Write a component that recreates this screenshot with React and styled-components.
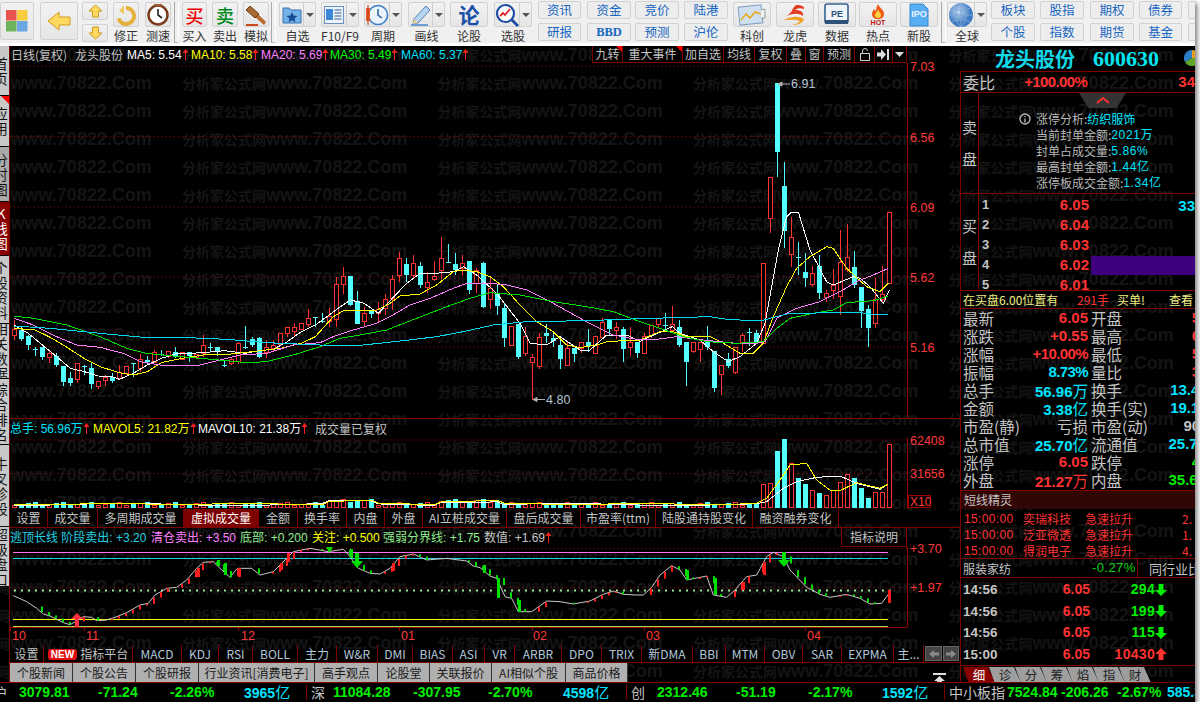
import React from 'react';
import styled, { createGlobalStyle } from 'styled-components';

const CJK = '"Noto Sans CJK SC", "Liberation Sans", sans-serif';
const NUM = '"Liberation Sans", "Noto Sans CJK SC", sans-serif';
const LINE = '#7d0000';
const RED = '#ff3232';
const GREEN = '#00ee00';
const CYAN = '#00e5ff';
const GREY = '#c4c4c4';

const Global = createGlobalStyle`
  html, body { margin: 0; padding: 0; background: #fff; }
  * { box-sizing: border-box; }
`;

const Window = styled.div`
  position: relative; isolation: isolate; width: 1195px; height: 702px; background: #000;
  box-shadow: 2px 3px 5px rgba(0,0,0,.55); display: flex; flex-direction: column;
  font-family: ${CJK}; overflow: hidden;
`;

/* ---------- watermark ---------- */
const WatermarkSvg = styled.svg`
  position: absolute; left: 0; top: 46px; width: 1195px; height: 656px; z-index: -1;
`;

/* ---------- toolbar ---------- */
const Toolbar = styled.div`
  flex: 0 0 46px; height: 46px; display: flex; align-items: flex-start; background: #f0f0f0; border-bottom: 3px solid #fff; overflow: hidden;
`;
const Tool = styled.div`
  flex: 0 0 ${p => p.$w}px; margin-left: ${p => p.$ml || 0}px; display: flex; flex-direction: column; align-items: stretch;
`;
const Face = styled.div`
  height: ${p => p.$h || 25}px; margin-top: ${p => p.$mt ?? 2}px; background: linear-gradient(#f2f2f2, #e6e6e6);
  border: 1px solid #d2d2d2; border-radius: 2px; display: flex; align-items: center; justify-content: center; position: relative;
`;
const Split = styled.div`
  flex: 0 0 12px; align-self: stretch; margin-left: auto; border-left: 1px solid #cfcfcf; display: flex; align-items: center; justify-content: center;
  &::after { content: ''; border: 4px solid transparent; border-top: 4px solid #555; border-bottom: 0; }
`;
const IconSlot = styled.div`flex: 1; display: flex; align-items: center; justify-content: center;`;
const ToolLabel = styled.div`
  text-align: center; font-size: 12px; line-height: 15px; color: #333; margin-top: 1px; white-space: nowrap;
`;
const Sep = styled.div`
  flex: 0 0 5px; height: 41px; margin: 2px 0 0 ${p => p.$ml || 3}px; border-left: 1px solid #a8a8a8; border-right: 1px solid #fff; border-bottom: 1px solid #bbb;
`;
const Stack = styled.div`
  flex: 0 0 ${p => p.$w || 44}px; margin-left: ${p => p.$ml || 0}px; display: flex; flex-direction: column; gap: 4px; padding-top: 1px;
`;
const TextBtn = styled.div`
  height: 18px; border: 1px solid #d2d2d2; border-radius: 2px; background: #ededed; color: #1766c0; font-size: 12.5px;
  line-height: 16px; text-align: center; font-weight: ${p => p.$bold ? 700 : 400}; font-family: ${p => p.$bold ? '"Liberation Serif", serif' : 'inherit'};
`;
const BigGlyph = styled.span`
  font-size: ${p => p.$s || 18}px; line-height: 1; font-weight: ${p => p.$w || 500}; color: ${p => p.$c};
`;

const IToolItem = ({ w, ml, label, split, children }) => (
  <Tool $w={w} $ml={ml}>
    <Face>
      <IconSlot>{children}</IconSlot>
      {split && <Split />}
    </Face>
    <ToolLabel>{label}</ToolLabel>
  </Tool>
);
const Pair = ({ ml, a, b, w, boldB }) => (
  <Stack $ml={ml} $w={w}><TextBtn>{a}</TextBtn><TextBtn $bold={boldB}>{b}</TextBtn></Stack>
);

/* ---------- body ---------- */
const Body = styled.div`flex: 0 0 637px; height: 637px; display: flex; border-bottom: 1px solid ${LINE}; overflow: hidden;`;
const Rail = styled.div`flex: 0 0 10px; border-right: 1px solid ${LINE}; display: flex; flex-direction: column; gap: 1px; overflow: hidden;`;
const RailTab = styled.div`
  flex: 0 0 ${p => p.$h}px; position: relative; overflow: hidden; display: flex; align-items: center;
  background: ${p => p.$active ? '#8a0000' : p.$dim ? '#a9a9a9' : '#c8c8c8'};
  color: ${p => p.$active ? '#fff' : '#111'};
  ${p => p.$corner ? `&::after { content:''; position:absolute; top:0; right:0; border:4px solid transparent; border-top-color:#f00; border-right-color:#f00; }` : ''}
`;
const RailText = styled.div`width: 14px; margin-left: -6px; font-size: 13.5px; line-height: 15px; word-break: break-all; text-align: center;`;

const Center = styled.div`flex: 0 0 950px; display: flex; flex-direction: column;`;
const PricePane = styled.div`flex: 0 0 373px; border-bottom: 1px solid ${LINE}; display: flex; flex-direction: column;`;
const Legend = styled.div`
  flex: 0 0 ${p => p.$h || 17}px; width: 897px; display: flex; align-items: center; font: 12px/1 ${NUM}; white-space: nowrap; padding-left: ${p => p.$pl ?? 1}px;
`;
const Seg = styled.span`
  flex: 0 0 ${p => p.$w}px; color: ${p => p.$c || GREY}; display: flex; align-items: center; white-space: pre;
`;
const CjkSeg = styled(Seg)`font-family: ${CJK}; font-size: 12px;`;
const ToolsRow = styled.div`margin-left: auto; display: flex; height: 17px;`;
const ToolTab = styled.div`
  width: ${p => p.$w}px; border-left: 1px solid ${LINE}; border-bottom: 1px solid ${LINE}; color: ${GREY}; font: 12px/16px ${CJK};
  text-align: center; position: relative; display: flex; align-items: center; justify-content: center; background: #000;
  ${p => p.$last ? `border-right:1px solid ${LINE};` : ''}
  ${p => p.$flag ? `&::after { content:''; position:absolute; top:0; right:0; border:3px solid transparent; border-top-color:#f00; border-right-color:#f00; }` : ''}
`;
const ChartSvg = styled.svg`display: block; flex: none; overflow: visible;`;
const VolPane = styled.div`flex: 0 0 90px; display: flex; flex-direction: column;`;
const TabRow = styled.div`flex: 0 0 ${p => p.$h}px; display: flex; border-bottom: 1px solid ${LINE};`;
const Tab = styled.div`
  flex: 0 0 ${p => p.$w}px; border-right: 1px solid ${LINE}; text-align: center; white-space: nowrap; overflow: hidden;
  font: 12px/${p => p.$lh || 17}px ${CJK}; background: ${p => p.$active ? '#7d0000' : 'transparent'};
  color: ${p => p.$active ? '#fff' : p.$c || GREY};
`;
const IndHeader = styled.div`
  flex: 0 0 19px; width: 897px; display: flex; align-items: center; font: 12px/1 ${NUM}; white-space: nowrap; border-right: 1px solid ${LINE};
`;
const InfoBtn = styled.div`
  margin-left: auto; width: 65px; height: 19px; border-left: 1px solid ${LINE}; border-bottom: 1px solid ${LINE}; color: ${GREY};
  font: 12px/18px ${CJK}; text-align: center;
`;
const NewBadge = styled.i`
  display: inline-block; font: bold 10px/11px ${NUM}; background: #e01010; color: #fff; border-radius: 3px; padding: 0 3px; margin-right: 3px; vertical-align: 1px;
`;
const NewsRow = styled.div`flex: 0 0 20px; display: flex; align-items: flex-start;`;
const NewsTab = styled.div`
  flex: 0 0 ${p => p.$w}px; height: 19px; background: #b0b0b0; border-right: 1px solid #333; color: #1a1a1a; text-align: center; font: 12px/19px ${CJK}; white-space: nowrap;
`;
const PinSlot = styled.div`margin-left: 305px; padding-top: 3px;`;
const ArrowBtn = styled.div`
  flex: 0 0 ${p => p.$w}px; margin: 1px 0 1px 1px; background: #444; border: 1px solid #666; display: flex; align-items: center; justify-content: center;
`;

/* ---------- right panel ---------- */
const Panel = styled.div`flex: 0 0 235px; display: flex; flex-direction: column; overflow: hidden;`;
const Title = styled.div`
  flex: 0 0 25px; display: flex; align-items: center; padding-left: 35px; color: #12d8e8; white-space: nowrap; position: relative;
  b { font: bold 20px/1 ${CJK}; } span { font: bold 22px/1 "Liberation Serif", serif; margin-left: 18px; color: #00e5f0; }
`;
const Globe = styled.div`margin-left: 25px;`;
const Boxed = styled.div`
  flex: 0 0 ${p => p.$h}px; border-left: 1px solid ${LINE}; border-top: 1px solid ${LINE}; display: flex; overflow: hidden;
`;
const WeiLabel = styled.div`width: 65px; padding-left: 2px; font-size: 16px; line-height: 20px; color: ${GREY};`;
const Bold = styled.span`font: bold 15px/20px ${NUM}; color: ${RED}; letter-spacing: ${p => p.$tight ? '-.6px' : 0}; margin-left: ${p => p.$ml || 0}px;`;
const SideLabel = styled.div`
  flex: 0 0 18px; border-right: 1px solid ${LINE}; color: ${GREY}; font-size: 15px; line-height: 32px; display: flex; flex-direction: column; align-items: center; justify-content: center;
`;
const SideWrap = styled.div`flex: 1; min-width: 0;`;
const Notch = styled.div`
  width: 47px; height: 15px; margin-left: 100px; background: #333; clip-path: polygon(0 0, 100% 0, 80% 100%, 20% 100%); display: flex; justify-content: center; padding-top: 3px;
`;
const InfoLines = styled.div`margin: 3px 0 0 57px; font-size: 12px; line-height: 16px; color: #b8b8b8; white-space: nowrap;`;
const InfoLine = styled.div`
  display: flex; align-items: center;
  b { font-weight: 400; color: ${CYAN}; font-family: ${p => p.$n ? NUM : CJK}; letter-spacing: ${p => p.$n ? '.6px' : 0}; }
  svg { margin-left: -17px; margin-right: 5px; }
`;
const BookRow = styled.div`
  height: 20px; display: grid; grid-template-columns: 13px 92px 1fr; column-gap: 2px; align-items: center; padding-left: 3px;
`;
const BookNum = styled.span`font: bold 13px/20px ${NUM}; color: ${GREY};`;
const BookPrice = styled.span`text-align: right; font: bold 15px/20px ${NUM}; color: ${RED};`;
const BookQty = styled.div`
  height: 19px; margin-top: 2px; text-align: right; font: bold 15px/19px ${NUM}; color: ${CYAN}; background: ${p => p.$fill ? '#3f007f' : 'transparent'};
`;
const BuyLine = styled.div`
  display: flex; width: 100%; padding-left: 2px; font-size: 12px; line-height: 17px; color: #f0f080; white-space: nowrap; border-bottom: 1px solid ${LINE};
`;
const BuyPart = styled.span`flex: 0 0 ${p => p.$w}px; color: ${p => p.$c || 'inherit'};`;
const Quote = styled.div`flex: 0 0 181px; border-left: 1px solid ${LINE}; overflow: hidden;`;
const QRow = styled.div`height: 18px; display: grid; grid-template-columns: 125px 133px; padding-left: 2px; width: 262px;`;
const QCell = styled.div`display: flex; justify-content: space-between; padding-left: ${p => p.$pl || 0}px; white-space: nowrap;`;
const QLabel = styled.span`font-size: 15.5px; line-height: 18px; color: ${GREY};`;
const QVal = styled.span`
  font: bold 15px/18px ${NUM}; color: ${p => p.$c || RED}; letter-spacing: ${p => p.$tight ? '-.6px' : 0};
  i { font: 400 15.5px/18px ${CJK}; font-style: normal; }
`;
const Sprite = styled.div`
  flex: 0 0 19px; border-left: 1px solid ${LINE}; border-top: 1px solid ${LINE}; background: #330606; color: ${GREY}; font-size: 12px; line-height: 18px; padding-left: 3px;
`;
const SpriteRows = styled.div`flex: 0 0 49px; border-left: 1px solid ${LINE}; padding-top: 2px; overflow: hidden;`;
const SpriteRow = styled.div`
  height: 16px; display: grid; grid-template-columns: 59px 62px 97px 20px; padding-left: 3px; color: ${RED}; font-size: 12px; line-height: 16px; white-space: nowrap;
  span:first-child { font-family: ${NUM}; letter-spacing: .35px; }
`;
const Sector = styled.div`
  flex: 0 0 20px; border: 1px solid ${LINE}; border-right: 0; display: flex; white-space: nowrap; align-items: center; color: ${GREY};
  font-size: 12px; padding-left: 2px;
`;
const SectorPct = styled.span`margin-left: 81px; flex: 0 0 45px; font: 13px/18px ${NUM}; color: #10d010; letter-spacing: .4px;`;
const SectorMore = styled.span`border-left: 1px solid ${LINE}; height: 18px; padding-left: 11px; font-size: 13px; line-height: 20px;`;
const Ticks = styled.div`flex: 0 0 87px; border-left: 1px solid ${LINE}; padding-top: 1px;`;
const TickRow = styled.div`
  height: 21.5px; display: grid; grid-template-columns: 60px 67px 65px 16px; align-items: center; padding-left: 2px;
`;
const TickTime = styled.span`font: bold 13.5px/21px ${NUM}; color: ${GREY};`;
const TickPrice = styled.span`text-align: right; font: bold 14px/21px ${NUM}; color: ${RED};`;
const TickQty = styled.span`text-align: right; font: bold 14px/21px ${NUM}; color: ${p => p.$up ? RED : GREEN}; letter-spacing: .3px;`;
const TabStrip = styled.div`
  flex: 0 0 18px; border: 1px solid ${LINE}; border-right: 0; border-bottom: 0; display: flex; padding: 1px 0 0 2px;
`;
const Trap = styled.div`
  flex: 0 0 ${p => p.$w || 32}px; margin-left: ${p => p.$first ? 0 : -6}px; height: 16px; font-size: 12.5px; line-height: 16px; text-align: center;
  background: ${p => p.$active ? '#8a0000' : '#9e9e9e'}; color: ${p => p.$active ? '#fff' : '#222'};
  clip-path: polygon(0 0, 78% 0, 100% 100%, 18% 100%);
`;

/* ---------- status ---------- */
const Status = styled.div`flex: 0 0 19px; height: 19px; display: flex; align-items: flex-start; padding-top: 1px; white-space: nowrap; overflow: hidden; background: #000;`;
const SCell = styled.div`
  flex: 0 0 ${p => p.$w}px; height: 16px; margin-left: ${p => p.$ml || 0}px; font: bold 14px/16px ${NUM}; color: ${p => p.$c || GREEN};
  ${p => p.$sep ? `border-left:1px solid ${LINE}; padding-left:4px;` : ''}
  i { font: 400 15px/16px ${CJK}; font-style: normal; }
`;
const SLabel = styled(SCell)`font: 14px/16px ${CJK}; color: ${GREY};`;

/* ---------- chart data ---------- */
const C = [
 ['u',329,335,320,340],['d',330,339,327,341],['d',336,345,335,350],['d',349,350,347,356],['d',347,357,347,360],['u',353,357,351,363],['d',356,365,353,367],['d',366,382,366,386],['d',378,383,372,386],['u',363,379,363,383],
 ['d',366,366,365,375],['d',368,384,363,389],['u',381,386,381,389],['u',377,380,375,386],['d',377,381,373,383],['u',372,378,365,380],['u',366,373,366,375],['d',363,363,363,377],['u',359,368,354,372],['d',360,362,356,364],
 ['u',352,362,350,363],['d',354,354,350,356],['u',351,356,351,358],['d',352,356,347,358],['u',352,359,352,360],['d',352,356,352,362],['u',354,357,354,359],['u',345,353,335,357],['d',347,347,343,352],['d',347,352,347,356],
 ['d',365,365,361,367],['u',359,363,357,365],['u',343,361,342,364],['d',347,347,326,349],['d',339,345,337,347],['d',338,357,337,358],['u',347,352,340,358],['u',345,348,340,351],['u',333,344,333,346],['u',327,333,327,337],
 ['u',327,331,323,336],['u',323,329,323,330],['u',318,324,309,327],['d',317,317,317,327],['d',321,321,313,323],['u',316,321,308,327],['u',284,319,277,327],['u',276,284,267,294],['d',276,305,276,306],['d',301,324,291,324],
 ['u',313,321,307,326],['d',311,314,311,318],['u',309,313,302,322],['u',299,308,294,315],['u',279,298,275,310],['u',258,275,252,282],['d',264,275,258,282],['u',263,275,255,278],['d',266,285,262,288],['u',282,287,272,293],
 ['u',276,279,261,281],['u',258,270,237,279],['d',262,262,244,263],['d',264,270,253,275],['u',263,268,255,275],['d',261,290,261,294],['u',270,283,268,293],['d',263,307,262,308],['u',288,299,277,309],['d',293,306,285,315],
 ['d',308,338,303,347],['u',326,345,326,346],['d',324,357,324,359],['u',336,353,327,356],['u',357,362,354,400],['u',337,366,333,369],['d',333,336,324,343],['d',338,341,332,347],['d',345,359,340,369],['u',348,365,342,366],
 ['d',348,354,348,362],['u',342,348,342,353],['d',342,346,329,352],['u',336,353,336,354],['u',322,337,318,338],['d',320,329,320,335],['u',327,330,322,339],['d',329,349,327,362],['u',342,347,327,356],['d',342,353,342,358],
 ['u',336,353,333,354],['u',325,335,325,338],['u',318,324,318,327],['d',325,325,313,332],['u',324,330,306,332],['d',327,345,320,347],['d',342,362,342,386],['u',342,351,342,353],['u',342,349,342,362],['d',340,347,326,350],
 ['d',351,388,351,392],['u',365,374,365,395],['d',359,366,353,368],['u',347,372,347,374],['u',335,342,333,352],['d',332,332,328,346],['d',333,342,330,343],['u',263,343,263,344],['u',177,218,177,233],['d',83,152,83,177],
 ['d',186,231,162,248],['u',237,254,217,267],['d',257,257,242,275],['d',272,278,253,287],['u',273,284,266,287],['d',266,293,255,299],['u',293,297,290,302],['u',285,290,269,299],['u',262,296,230,315],['u',257,269,224,272],
 ['d',267,285,251,288],['d',287,311,287,328],['d',309,328,305,347],['u',299,323,278,328],['u',294,299,266,303],['u',212,283,212,284],
];
const cx = i => 14 + 7 * i;
const z8 = a => a.map(([x, y]) => [x / 3, 230 + y / 3]);
const z9 = a => a.map(([x, y]) => [320 + x / 3, 220 + y / 3]);
const z10 = a => a.map(([x, y]) => [640 + x / 3, 60 + y / 3]);
const MA = [
 ['#ffffff', [...z8([[42,285],[85,310],[127,345],[170,380],[211,415],[253,425],[295,438],[337,440],[358,448],[400,430],[442,405],[484,385],[526,372],[610,368],[673,362],[736,370],[778,362],[820,358],[862,335],[904,305],[946,285]]), ...z9([[7,300],[50,268],[91,240],[133,250],[175,280],[217,235],[260,190],[300,160],[345,160],[400,155],[430,140],[470,165],[530,220],[600,310],[630,370],[680,375],[720,350],[780,390],[810,390],[860,345],[920,345],[960,365]]), ...z10([[30,830],[75,810],[97,800],[120,820],[180,840],[220,875],[265,905],[300,890],[350,850],[375,790],[415,570],[440,470],[455,456],[475,456],[510,570],[560,665],[580,675],[640,650],[660,655],[690,680],[730,730],[748,690]])]],
 ['#ffff00', [...z8([[42,295],[105,300],[147,320],[190,345],[252,385],[300,410],[358,428],[400,435],[442,425],[484,398],[546,385],[610,375],[694,372],[757,365],[841,355],[904,340],[946,320]]), ...z9([[40,290],[70,272],[170,270],[210,250],[240,228],[300,222],[350,195],[400,155],[430,150],[470,155],[510,170],[550,200],[600,255],[650,305],[700,335],[740,375],[780,383],[830,375],[860,365],[910,362],[960,360]]), ...z10([[60,815],[100,815],[140,830],[210,830],[250,850],[300,880],[340,880],[370,850],[400,770],[440,680],[470,625],[510,590],[560,560],[580,565],[620,625],[680,680],[720,695],[745,670]])]],
 ['#ff80ff', [...z8([[42,265],[100,285],[170,320],[230,345],[300,352],[370,370],[420,395],[480,405],[600,405],[640,395],[720,375],[800,370],[880,345],[960,338]]), ...z9([[40,350],[100,330],[170,310],[210,290],[270,255],[330,235],[400,205],[440,190],[510,190],[560,195],[620,210],[700,250],[790,300],[840,325],[880,345],[960,360]]), ...z10([[50,838],[110,830],[170,838],[240,845],[290,850],[350,850],[375,845],[410,775],[470,745],[540,725],[600,695],[650,665],[700,645],[745,625]])]],
 ['#00e000', [...z8([[42,258],[100,265],[200,285],[300,320],[380,355],[440,370],[520,378],[600,385],[680,392],[740,398],[800,395],[880,375],[960,350]]), ...z9([[60,355],[120,345],[200,330],[290,295],[380,260],[450,235],[510,218],[600,225],[700,245],[800,260],[880,275],[960,305]]), ...z10([[60,805],[130,830],[200,845],[290,850],[370,845],[410,805],[450,775],[520,760],[580,750],[620,728],[700,722],[745,708]])]],
 ['#00d8f0', [...z8([[42,288],[150,295],[300,310],[430,322],[540,322],[680,328],[800,338],[960,345]]), ...z9([[130,375],[250,362],[350,350],[430,335],[520,315],[620,305],[800,302],[960,296]]), ...z10([[210,770],[260,778],[360,783],[440,762],[560,758],[660,758],[720,765],[745,762]])]],
];
const pts = a => a.map(p => p.join(',')).join(' ');
const GRID = [66, 136.5, 207, 277, 347];
const AXIS = [['7.03', 66], ['6.56', 136.5], ['6.09', 207], ['5.62', 277], ['5.16', 347]];

const VOLTOP = [484,483,451,439,463,478,484,490,493,495,490,482,474,478,488,498,492,492,444];
const bump = i => ((i > 44 && i < 52) || (i > 60 && i < 70) ? 3 : 0);
const volTop = i => (i >= 107 ? VOLTOP[i - 107] : 507 - (2 + ((i * 13) % 4) + bump(i)));
function z12(a) { return a.map(([x, y]) => [640 + x / 3, 420 + y / 3]); }
const vol5 = [...Array.from({ length: 107 }, (_, i) => [cx(i), 504 - bump(i) + Math.sin(i / 3)]), ...z12([[380,235],[420,180],[450,135],[500,130],[530,180],[570,210],[600,212],[650,188],[720,205],[745,192]])];
const vol10 = [...Array.from({ length: 107 }, (_, i) => [cx(i), 504.5 - bump(i) + Math.cos(i / 5)]), ...z12([[380,245],[430,205],[470,185],[530,172],[600,168],[650,190],[720,208],[745,192]])];

const z6 = a => a.map(([x, y]) => [x / 3, 500 + y / 3]);
const z7 = a => a.map(([x, y]) => [480 + x / 3, 500 + y / 3]);
const IND = [...z6([[40,287],[80,305],[110,325],[130,342],[150,348],[190,368],[210,374],[232,362],[250,350],[275,352],[290,362],[320,360],[345,352],[380,338],[420,315],[445,310],[465,285],[500,265],[530,262],[560,240],[590,205],[610,187],[640,185],[660,205],[690,232],[712,205],[755,205],[780,225],[820,215],[845,190],[880,155],[930,145],[985,155],[1030,148],[1050,170],[1075,205],[1110,220],[1140,222],[1170,205],[1200,170],[1240,162],[1280,180],[1340,175],[1400,183],[1420,198]]),
  ...z7([[0,203],[30,228],[50,235],[75,290],[95,295],[115,335],[155,335],[200,303],[240,305],[280,312],[330,303],[370,283],[400,273],[430,283],[470,285],[490,285],[515,262],[540,225],[575,197],[600,210],[620,240],[680,228],[700,285],[740,292],[765,270],[800,230],[830,225],[860,170],[880,157],[910,170],[930,210],[980,262],[1020,283],[1050,292],[1100,283],[1140,295],[1170,312],[1205,310],[1225,283]])];
const lerp = x => {
  for (let i = 1; i < IND.length; i++) if (x <= IND[i][0]) {
    const [a, b] = IND[i - 1], [c, d] = IND[i];
    return b + (d - b) * (x - a) / (c - a || 1);
  }
  return IND[IND.length - 1][1];
};
const BIG = [[224,563,575,0],[350,549,558,0],[518,600,612,0],[714,578,595,0],[686,570,580,0],[763,562,575,1],[197,568,577,1],[238,568,577,1],[280,563,570,1],[287,553,562,1],[392,563,571,1],[742,582,590,1],[888,590,603,1],[217,560,566,0],[483,565,573,0],[497,578,598,0]];

const Wm = () => (
  <WatermarkSvg aria-hidden="true">
    <defs>
      <pattern id="wmark" x="-73.5" y="-5" width="255.5" height="28" patternUnits="userSpaceOnUse">
        <text x="0" y="20" fill="#151515" fontWeight="700" fontSize="14" fontFamily="Noto Sans CJK SC">分析家公式网<tspan fontSize="18" fontFamily="Liberation Sans">www.70822.Com</tspan></text>
      </pattern>
    </defs>
    <rect width="1195" height="656" fill="url(#wmark)" />
  </WatermarkSvg>
);

const Candle = ({ c, i }) => {
  const x = cx(i);
  const [t, bt, bb, wt, wb] = c;
  const col = t === 'u' ? RED : '#54ffff';
  if (t === 'd') return (
    <g>
      <rect x={x} y={wt} width="1" height={wb - wt} fill={col} />
      <rect x={x - 2} y={bt} width="5" height={Math.max(bb - bt, 1)} fill={col} />
    </g>
  );
  return (
    <g>
      <rect x={x} y={wt} width="1" height={Math.max(bt - wt, 0)} fill={col} />
      <rect x={x} y={bb} width="1" height={Math.max(wb - bb, 0)} fill={col} />
      <rect x={x - 1.5} y={bt + .5} width="4" height={bb - bt} fill="#000" stroke={col} />
    </g>
  );
};

const PriceChart = () => (
  <ChartSvg width="950" height="355" viewBox="10 63 950 355">
    {GRID.map(y => <line key={y} x1="10" x2="907" y1={y} y2={y} stroke="#a00000" strokeDasharray="1 3" />)}
    <line x1="907.5" x2="907.5" y1="63" y2="418" stroke="#a00000" />
    {AXIS.map(([t, y]) => <text key={t} x="910" y={y + 5} fill="#ff3a3a" fontFamily="Liberation Sans" fontSize="12.5">{t}</text>)}
    {C.map((c, i) => <Candle key={i} c={c} i={i} />)}
    {MA.map(([col, p], i) => <polyline key={i} points={pts(p)} fill="none" stroke={col} strokeWidth="1" shapeRendering="crispEdges" />)}
    <path d="M778 84h12M778 84l4-2v4zM533 399.5h12M533 399.5l4-2v4z" stroke="#b0b0b0" fill="#b0b0b0" />
    <text x="791" y="88" fill="#b4c4d4" fontFamily="Liberation Sans" fontSize="12.5">6.91</text>
    <text x="546" y="404" fill="#b4c4d4" fontFamily="Liberation Sans" fontSize="12.5">4.80</text>
  </ChartSvg>
);
const VolChart = () => (
  <ChartSvg width="950" height="71" viewBox="10 438 950 71">
    <line x1="10" x2="907" y1="440" y2="440" stroke="#a00000" strokeDasharray="1 3" />
    <line x1="10" x2="907" y1="473.5" y2="473.5" stroke="#a00000" strokeDasharray="1 3" />
    <line x1="907.5" x2="907.5" y1="438" y2="509" stroke="#a00000" />
    {C.map((c, i) => c[0] === 'u'
      ? <rect key={i} x={cx(i) - 1.5} y={volTop(i) + .5} width="4" height={507 - volTop(i)} fill="#000" stroke={RED} />
      : <rect key={i} x={cx(i) - 2} y={volTop(i)} width="5" height={508 - volTop(i)} fill="#54ffff" />)}
    <polyline points={pts(vol10)} fill="none" stroke="#fff" shapeRendering="crispEdges" />
    <polyline points={pts(vol5)} fill="none" stroke="#ffff00" shapeRendering="crispEdges" />
    <text x="910" y="445" fill="#ff3a3a" fontFamily="Liberation Sans" fontSize="12.5">62408</text>
    <text x="910" y="478" fill="#ff3a3a" fontFamily="Liberation Sans" fontSize="12.5">31656</text>
    <rect x="908.5" y="495.5" width="22" height="12" fill="#000" stroke="#a00000" />
    <text x="910" y="506" fill="#ff3a3a" fontFamily="Liberation Sans" fontSize="12">X10</text>
  </ChartSvg>
);
const TICKX = [10, 84, 238, 399, 532, 644, 805];
const TICKL = [['10', 12], ['11', 86], ['12', 241], ['01', 401], ['02', 533], ['03', 646], ['04', 807]];
const IndChart = () => {
  const ticks = [];
  for (let i = 4; i < 126; i++) {
    const x = cx(i) - 1, a = lerp(x - 7), b = lerp(x);
    if (Math.abs(a - b) < 1.2) continue;
    const up = b < a;
    ticks.push(<rect key={i} x={x} y={Math.min(a, b)} width="2" height={Math.min(Math.abs(a - b), 7)} fill={up ? '#ff1c1c' : '#00e000'} />);
  }
  return (
    <ChartSvg width="950" height="98" viewBox="10 547 950 98">
      <line x1="10" x2="907" y1="548.5" y2="548.5" stroke="#a00000" strokeDasharray="1 3" />
      <line x1="10" x2="907" y1="587.5" y2="587.5" stroke="#a00000" strokeDasharray="1 3" />
      <line x1="907.5" x2="907.5" y1="547" y2="627" stroke="#a00000" />
      <line x1="10" x2="907" y1="627.5" y2="627.5" stroke="#a00000" />
      <line x1="13" x2="888" y1="552.5" y2="552.5" stroke="#ff70f0" />
      <line x1="13" x2="888" y1="558.5" y2="558.5" stroke="#20d0e0" />
      <line x1="13" x2="888" y1="619.5" y2="619.5" stroke="#ffff00" />
      <line x1="13" x2="888" y1="626.5" y2="626.5" stroke="#a0e040" />
      {C.map((_, i) => <rect key={i} x={cx(i)} y="589.5" width="2" height="2" fill="#98e898" />)}
      <polyline points={pts(IND)} fill="none" stroke="#c8c8c8" />
      {ticks}
      {BIG.map(([x, a, b, up], i) => <rect key={i} x={x} y={a} width="3" height={b - a} fill={up ? '#ff1c1c' : '#00e000'} />)}
      <path d="M75 627v-8h-4l6-6 6 6h-4v8z" fill="#ff3040" />
      <path d="M355 553v8h-4l6 7 6-7h-4v-8zM782 552v8h-4l6 7 6-7h-4v-8zM326 547h7l-3.5 6z" fill="#00e000" />
      {TICKX.map(x => <line key={x} x1={x + .5} x2={x + .5} y1="627" y2="631" stroke="#a00000" />)}
      {TICKL.map(([t, x]) => <text key={t} x={x} y="640" fill="#ff3a3a" fontFamily="Liberation Sans" fontSize="12.5">{t}</text>)}
      <text x="910" y="553" fill="#ff3a3a" fontFamily="Liberation Sans" fontSize="12.5">+3.70</text>
      <text x="910" y="592" fill="#ff3a3a" fontFamily="Liberation Sans" fontSize="12.5">+1.97</text>
    </ChartSvg>
  );
};

/* ---------- icons ---------- */
const Up = () => <svg width="7" height="11" viewBox="0 0 7 11" style={{ flex: 'none' }}><path d="M3.500 0 6.500 4H4v7H3V4H.5z" fill="#ff2020" /></svg>;
const Ic = {
  logo: <svg width="22" height="22" viewBox="0 0 22 22"><rect width="10.5" height="10.5" fill="#e8534f"/><rect x="11" width="10.5" height="10.5" fill="#f5cd3d"/><rect y="11" width="10.5" height="10.5" fill="#6db35c"/><rect x="11" y="11" width="10.5" height="10.5" fill="#6aa6e2"/></svg>,
  back: <svg width="24" height="20" viewBox="0 0 24 20"><path d="M1 10 12 1v5h11v8H12v5z" fill="#ffd860" stroke="#d09a20"/></svg>,
  up: <svg width="15" height="14" viewBox="0 0 15 14"><path d="M7.5 1 14 7h-3.5v6h-6V7H1z" fill="#ffd860" stroke="#d09a20"/></svg>,
  down: <svg width="15" height="14" viewBox="0 0 15 14"><path d="M7.5 13 14 7h-3.5V1h-6v6H1z" fill="#ffd860" stroke="#d09a20"/></svg>,
  redo: <svg width="22" height="22" viewBox="0 0 22 22"><path d="M11 4a8 8 0 1 1-7.5 10.5" fill="none" stroke="#e4b13c" strokeWidth="4"/><path d="M4 7 9 1v9z" fill="#f0c860"/></svg>,
  clock: <svg width="22" height="22" viewBox="0 0 22 22"><circle cx="11" cy="11" r="9.5" fill="#fff" stroke="#7a3d1c" strokeWidth="2.5"/><path d="M11 5v6l4 3" stroke="#222" strokeWidth="1.6" fill="none"/><rect x="7" y="0" width="8" height="2" fill="#a05a2c"/></svg>,
  gavel: <svg width="24" height="24" viewBox="0 0 24 24"><path d="M12 9 22 19l-2 3L9 12z" fill="#b96a2e"/><path d="M6 3l9 8-4 4-9-8z" fill="#a8682f" stroke="#6d3d16"/><path d="M2 22h12" stroke="#c94b1b" strokeWidth="2"/></svg>,
  folder: <svg width="20" height="19" viewBox="0 0 20 19"><path d="M1 3h6l2 2h10v13H1z" fill="#72b2e8" stroke="#3b72ae"/><path d="M10 7l1.6 3.6 3.9.3-3 2.5 1 3.8-3.5-2-3.5 2 1-3.8-3-2.5 3.9-.3z" fill="#184d96"/></svg>,
  doc: <svg width="20" height="20" viewBox="0 0 20 20"><rect x=".5" y="1.5" width="19" height="17" fill="#eef4fb" stroke="#6a8fc0"/><rect x="2" y="4" width="7" height="11" fill="#3d87d8"/><path d="M10.5 5h7M10.5 8h7M10.5 11h7M10.5 14h7" stroke="#3a5d98"/></svg>,
  cycle: <svg width="24" height="22" viewBox="0 0 24 22"><circle cx="13" cy="11" r="9.5" fill="#eaf4ff" stroke="#3f7fc8" strokeWidth="1.6"/><path d="M13 5v6l4 3" stroke="#2f5f9f" strokeWidth="1.5" fill="none"/><rect x="1" y="4" width="4" height="13" fill="#f06030"/><path d="M3 1v20" stroke="#b03010"/></svg>,
  pencil: <svg width="22" height="22" viewBox="0 0 22 22"><path d="M4 15 16 2l4 4L8 19l-5 1z" fill="#b8d4f0" stroke="#4f7fb5"/><path d="M3 20l1-5 4 4z" fill="#f0d090"/><path d="M1 21h17" stroke="#3a80d0" strokeWidth="1.4"/></svg>,
  scan: <svg width="24" height="24" viewBox="0 0 24 24"><circle cx="10.5" cy="10.5" r="8.5" fill="#fff" stroke="#1f4ea8" strokeWidth="2.2"/><path d="M16.5 16.5 23 23" stroke="#1f4ea8" strokeWidth="3"/><path d="M5 13l3-3 2 2 5-6" stroke="#e8262a" strokeWidth="1.8" fill="none"/></svg>,
  kc: <svg width="30" height="24" viewBox="0 0 30 24"><rect x="2" y="3" width="23" height="18" fill="#cfe0f2" stroke="#7f9fc0" transform="rotate(-6 13 12)"/><path d="M4 17l5-6 4 4 5-6 6 2" stroke="#e8a820" strokeWidth="1.6" fill="none"/><path d="M24 7l4-1v9h-4" fill="#eef3f8" stroke="#999"/></svg>,
  dragon: <svg width="26" height="24" viewBox="0 0 26 24"><path d="M14 2c6 0 9 2 8 4-3-1-7-1-9 1 5 0 9 2 8 6-4-3-10-3-16 0 5-4 5-6 7-9z" fill="#e53a1e"/><path d="M2 17c5-3 14-5 20-1-1 4-6 6-12 6 4-1 7-2 8-4-5-2-10-1-16-1z" fill="#f0a020"/></svg>,
  pe: <svg width="26" height="23" viewBox="0 0 26 23"><rect x="1" y="1" width="23" height="19" rx="2" fill="#eef4fa" stroke="#39628f" strokeWidth="1.6"/><rect x="1" y="17" width="23" height="4" fill="#2f5378"/></svg>,
  hot: <svg width="24" height="24" viewBox="0 0 24 24"><path d="M12 1c1 4 6 5 6 10 0 3-2 5-6 5s-6-2-6-5c0-2 1-3 2-5 1 1 1 2 2 2 0-3 1-5 2-7z" fill="#f05a14"/><path d="M12 7c1 2 3 3 3 5 0 2-1 3-3 3s-3-1-3-3 2-3 3-5z" fill="#ffd040"/></svg>,
  ipo: <svg width="20" height="24" viewBox="0 0 20 24"><path d="M1 1h13l5 5v17H1z" fill="#58aef2" stroke="#3b86cc"/></svg>,
  globe: <svg width="26" height="26" viewBox="0 0 26 26"><defs><radialGradient id="gl" cx=".4" cy=".35"><stop offset="0" stopColor="#c8def5"/><stop offset="1" stopColor="#3a79c2"/></radialGradient></defs><circle cx="13" cy="13" r="12" fill="url(#gl)"/><path d="M1 13h24M13 1v24M4 6c6 3 12 3 18 0M4 20c6-3 12-3 18 0M13 1c-7 6-7 18 0 24M13 1c7 6 7 18 0 24" stroke="#7fa8d6" fill="none"/></svg>,
  ball: <svg width="16" height="16" viewBox="0 0 16 16"><path d="M8 8V0a8 8 0 0 1 8 8z" fill="#e8a020"/><path d="M8 8h8a8 8 0 0 1-8 8 8 8 0 0 1-7-4z" fill="#60a828"/><path d="M8 8 1 12a8 8 0 0 1 7-12z" fill="#2f7fc8"/></svg>,
  info: <svg width="12" height="12" viewBox="0 0 12 12"><circle cx="6" cy="6" r="5" fill="none" stroke="#b8b8b8" strokeWidth="1.4"/><path d="M6 3v1M6 5.5v4" stroke="#b8b8b8" strokeWidth="1.4"/></svg>,
  chev: <svg width="14" height="8" viewBox="0 0 14 8"><path d="M1 7 7 2l6 5" fill="none" stroke="#ff3232" strokeWidth="2"/></svg>,
  tickDown: <svg width="12" height="12" viewBox="0 0 12 12"><path d="M3.500 0h5v6H12l-6 6-6-6h3.500z" fill={GREEN}/></svg>,
  tickUp: <svg width="12" height="12" viewBox="0 0 12 12"><path d="M3.500 12h5V6H12L6 0 0 6h3.500z" fill={RED}/></svg>,
  lock: <svg width="12" height="13" viewBox="0 0 12 13"><rect x="1.500" y="5.500" width="9" height="7" fill="none" stroke="#ccc"/><path d="M3.500 5V3a2.500 2.500 0 0 1 5 0" stroke="#ccc" fill="none"/></svg>,
  next: <svg width="13" height="11" viewBox="0 0 13 11"><path d="M0 3.500h4V0l5 5.500-5 5.500V7.500H0z" fill="#ddd"/><rect x="10" width="2" height="11" fill="#ddd"/></svg>,
  menu: <svg width="9" height="5" viewBox="0 0 9 5"><path d="M0 0h9L4.500 5z" fill="#ddd"/></svg>,
  pin: <svg width="13" height="12" viewBox="0 0 13 12"><rect width="13" height="2" fill="#ddd"/><path d="M6.500 3 12 8H9v4H4V8H1z" fill="#ddd"/></svg>,
  left: <svg width="10" height="8" viewBox="0 0 10 8"><path d="M0 4 5 0v2.500h5v3H5V8z" fill="#8a8a8a"/></svg>,
  right: <svg width="10" height="8" viewBox="0 0 10 8"><path d="M10 4 5 0v2.500H0v3h5V8z" fill="#8a8a8a"/></svg>,
};

const PeLabel = styled.span`position: absolute; font: bold ${p => p.$s || 9}px/1 ${NUM}; color: ${p => p.$c}; margin-top: ${p => p.$mt || 0}px;`;

const TopBar = () => (
  <Toolbar>
    <Tool $w={34}><Face $h={38} $mt={2}>{Ic.logo}</Face></Tool>
    <Tool $w={38} $ml={6}><Face $h={38} $mt={2}>{Ic.back}</Face></Tool>
    <Stack $w={26} $ml={4}>
      <Face $h={18} $mt={1}>{Ic.up}</Face>
      <Face $h={18} $mt={0}>{Ic.down}</Face>
    </Stack>
    <IToolItem w={26} ml={5} label="修正">{Ic.redo}</IToolItem>
    <IToolItem w={26} ml={6} label="测速">{Ic.clock}</IToolItem>
    <Sep />
    <IToolItem w={25} ml={3} label="买入"><BigGlyph $c="#f00000">买</BigGlyph></IToolItem>
    <IToolItem w={26} ml={5} label="卖出"><BigGlyph $c="#008a20">卖</BigGlyph></IToolItem>
    <IToolItem w={26} ml={5} label="模拟">{Ic.gavel}</IToolItem>
    <Sep $ml={2} />
    <IToolItem w={37} ml={3} label="自选" split>{Ic.folder}</IToolItem>
    <IToolItem w={38} ml={5} label="F10/F9" split>{Ic.doc}</IToolItem>
    <IToolItem w={38} ml={5} label="周期" split>{Ic.cycle}</IToolItem>
    <IToolItem w={37} ml={6} label="画线" split>{Ic.pencil}</IToolItem>
    <IToolItem w={38} ml={5} label="论股"><BigGlyph $c="#1a50a8" $s={21} $w={700}>论</BigGlyph></IToolItem>
    <IToolItem w={37} ml={6} label="选股" split>{Ic.scan}</IToolItem>
    <Pair ml={6} w={43} a="资讯" b="研报" />
    <Pair ml={6} w={44} a="资金" b="BBD" boldB />
    <Pair ml={4} w={44} a="竞价" b="预测" />
    <Pair ml={5} w={44} a="陆港" b="沪伦" />
    <IToolItem w={38} ml={5} label="科创">{Ic.kc}</IToolItem>
    <IToolItem w={38} ml={5} label="龙虎">{Ic.dragon}</IToolItem>
    <IToolItem w={38} ml={4} label="数据">{Ic.pe}<PeLabel $c="#2f5378">PE</PeLabel></IToolItem>
    <IToolItem w={38} ml={3} label="热点">{Ic.hot}<PeLabel $c="#c01010" $s={7} $mt={16}>HOT</PeLabel></IToolItem>
    <IToolItem w={38} ml={3} label="新股">{Ic.ipo}<PeLabel $c="#e8f4ff">IPO</PeLabel></IToolItem>
    <Sep $ml={3} />
    <IToolItem w={38} ml={1} label="全球" split>{Ic.globe}</IToolItem>
    <Pair ml={4} w={44} a="板块" b="个股" />
    <Pair ml={5} w={44} a="股指" b="指数" />
    <Pair ml={6} w={44} a="期权" b="期货" />
    <Pair ml={5} w={43} a="债券" b="基金" />
    <Pair ml={6} w={44} a="外汇" b="港股" />
  </Toolbar>
);

const RAILS = [['首页', 49], ['应用', 50, 'corner'], ['分时图', 54, 'dim'], ['K线图', 53, 'active'], ['个股资料', 67], ['相关数据', 54], ['综合排名', 65], ['牛叉诊股', 81], ['超级盘口', 59]];
const VOLTABS = [['设置',38],['成交量',50],['多周期成交量',86],['虚拟成交量',75,1],['金额',39],['换手率',49],['内盘',38],['外盘',38],['AI立桩成交量',84],['盘后成交量',74],['市盈率(ttm)',75],['陆股通持股变化',97],['融资融券变化',86]];
const INDTABS = [['MACD',49],['KDJ',37],['RSI',34],['BOLL',45],['主力',39],['W&R',41],['DMI',35],['BIAS',40],['ASI',32],['VR',30],['ARBR',47],['DPO',40],['TRIX',40],['新DMA',51],['BBI',33],['MTM',39],['OBV',38],['SAR',39],['EXPMA',52],['主...',30]];
const NEWS = [['个股新闻',63],['个股公告',63],['个股研报',63],['行业资讯[消费电子]',116],['高手观点',63],['论股堂',52],['关联报价',62],['AI相似个股',74],['商品价格',62]];
const QUOTES = [
  ['最新','6.05',RED,'开盘','5.50',RED],['涨跌','+0.55',RED,'最高','6.05',RED],['涨幅','+10.00%',RED,'最低','5.28',RED,1],['振幅','8.73%',CYAN,'量比','3.12',RED,1],
  ['总手','56.96','c万','换手','13.47%',CYAN],['金额','3.38','c亿','换手(实)','19.16%',CYAN],['市盈(静)','亏损','g','市盈(动)','90.12',GREY],['总市值','25.70','c亿','流通值','25.70亿',CYAN],
  ['涨停','6.05',RED,'跌停','4.95',GREEN],['外盘','21.27','r万','内盘','35.69万',GREEN],
];
const StatusBar = () => (
  <Status>
    <SLabel $w={19} $ml={-7}>沪</SLabel>
    <SCell $w={79} $ml={7}>3079.81</SCell>
    <SCell $w={72}>-71.24</SCell>
    <SCell $w={74}>-2.26%</SCell>
    <SCell $w={62} $c={CYAN}>3965<i>亿</i></SCell>
    <SLabel $w={27} $sep>深</SLabel>
    <SCell $w={80}>11084.28</SCell>
    <SCell $w={75}>-307.95</SCell>
    <SCell $w={75}>-2.70%</SCell>
    <SCell $w={63} $c={CYAN}>4598<i>亿</i></SCell>
    <SLabel $w={31} $sep>创</SLabel>
    <SCell $w={79}>2312.46</SCell>
    <SCell $w={72}>-51.19</SCell>
    <SCell $w={74}>-2.17%</SCell>
    <SCell $w={62} $c={CYAN}>1592<i>亿</i></SCell>
    <SLabel $w={63} $sep>中小板指</SLabel>
    <SCell $w={54}>7524.84</SCell>
    <SCell $w={56}>-206.26</SCell>
    <SCell $w={50}>-2.67%</SCell>
    <SCell $w={40} $c={CYAN}>585.3</SCell>
  </Status>
);

export default function App() {
  return (
    <>
      <Global />
      <Window>
        <Wm />
        <TopBar />
        <Body>
          <Rail>
            {RAILS.map(([t, h, f]) => (
              <RailTab key={t} $h={h} $corner={f === 'corner'} $dim={f === 'dim'} $active={f === 'active'}><RailText>{t}</RailText></RailTab>
            ))}
          </Rail>
          <Center>
            <PricePane>
              <Legend>
                <CjkSeg $w={64}>日线(复权)</CjkSeg>
                <CjkSeg $w={52}>龙头股份</CjkSeg>
                <Seg $w={64} $c="#fff">MA5: 5.54<Up /></Seg>
                <Seg $w={70} $c="#ffff00">MA10: 5.58<Up /></Seg>
                <Seg $w={69} $c="#ff80ff">MA20: 5.69<Up /></Seg>
                <Seg $w={71} $c="#00ff00">MA30: 5.49<Up /></Seg>
                <Seg $w={70} $c="#00e0ff">MA60: 5.37<Up /></Seg>
                <ToolsRow>
                  <ToolTab $w={30} $flag>九转</ToolTab>
                  <ToolTab $w={60} $flag>重大事件</ToolTab>
                  <ToolTab $w={41}>加自选</ToolTab>
                  <ToolTab $w={31}>均线</ToolTab>
                  <ToolTab $w={32}>复权</ToolTab>
                  <ToolTab $w={19}>叠</ToolTab>
                  <ToolTab $w={18}>窗</ToolTab>
                  <ToolTab $w={31}>预测</ToolTab>
                  <ToolTab $w={20}>{Ic.lock}</ToolTab>
                  <ToolTab $w={18}>{Ic.next}</ToolTab>
                  <ToolTab $w={15} $last>{Ic.menu}</ToolTab>
                </ToolsRow>
              </Legend>
              <PriceChart />
            </PricePane>
            <VolPane>
              <Legend $h={19} $pl={0}>
                <Seg $w={83} $c={CYAN}>总手: 56.96万<Up /></Seg>
                <Seg $w={105} $c="#ffff00">MAVOL5: 21.82万<Up /></Seg>
                <Seg $w={117} $c="#fff">MAVOL10: 21.38万<Up /></Seg>
                <CjkSeg $w={80}>成交量已复权</CjkSeg>
              </Legend>
              <VolChart />
            </VolPane>
            <TabRow $h={19}>
              {VOLTABS.map(([t, w, a]) => <Tab key={t} $w={w} $active={!!a}>{t}</Tab>)}
            </TabRow>
            <IndHeader>
              <Seg $w={141} $c="#20d0e0">逃顶长线 阶段卖出: +3.20</Seg>
              <Seg $w={89} $c="#ff80ff">清仓卖出: +3.50</Seg>
              <Seg $w={72} $c="#90ee90">底部: +0.200</Seg>
              <Seg $w={71} $c="#ffff00">关注: +0.500</Seg>
              <Seg $w={101} $c="#90ee90">强弱分界线: +1.75</Seg>
              <Seg $w={70} $c={GREY}>数值: +1.69<Up /></Seg>
              <InfoBtn>指标说明</InfoBtn>
            </IndHeader>
            <IndChart />
            <TabRow $h={18}>
              <Tab $w={34}>设置</Tab>
              <Tab $w={89}><NewBadge>NEW</NewBadge>指标平台</Tab>
              {INDTABS.map(([t, w]) => <Tab key={t} $w={w} $c="#b4c8dc">{t}</Tab>)}
              <ArrowBtn $w={17}>{Ic.left}</ArrowBtn>
              <ArrowBtn $w={16}>{Ic.right}</ArrowBtn>
            </TabRow>
            <NewsRow>
              {NEWS.map(([t, w]) => <NewsTab key={t} $w={w}>{t}</NewsTab>)}
              <PinSlot>{Ic.pin}</PinSlot>
            </NewsRow>
          </Center>
          <Panel>
            <Title>
              <b>龙头股份</b><span>600630</span>
              <Globe>{Ic.ball}</Globe>
            </Title>
            <Boxed $h={21}>
              <WeiLabel>委比</WeiLabel>
              <Bold $tight>+100.00%</Bold>
              <Bold $ml={91}>34</Bold>
            </Boxed>
            <Boxed $h={101}>
              <SideLabel><span>卖</span><span>盘</span></SideLabel>
              <SideWrap>
                <Notch>{Ic.chev}</Notch>
                <InfoLines>
                  <InfoLine>{Ic.info}涨停分析:<b>纺织服饰</b></InfoLine>
                  <InfoLine $n>当前封单金额:<b>2021万</b></InfoLine>
                  <InfoLine $n>封单占成交量:<b>5.86%</b></InfoLine>
                  <InfoLine $n>最高封单金额:<b>1.44亿</b></InfoLine>
                  <InfoLine $n>涨停板成交金额:<b>1.34亿</b></InfoLine>
                </InfoLines>
              </SideWrap>
            </Boxed>
            <Boxed $h={97}>
              <SideLabel><span>买</span><span>盘</span></SideLabel>
              <SideWrap>
                {[['1','6.05','33'],['2','6.04'],['3','6.03'],['4','6.02','',1],['5','6.01']].map(([n, p, q, f]) => (
                  <BookRow key={n}>
                    <BookNum>{n}</BookNum>
                    <BookPrice>{p}</BookPrice>
                    <BookQty $fill={f}>{q}</BookQty>
                  </BookRow>
                ))}
              </SideWrap>
            </Boxed>
            <Boxed $h={19}>
              <BuyLine>
                <BuyPart $w={114}>在买盘6.00位置有</BuyPart>
                <BuyPart $w={40} $c={RED}>291手</BuyPart>
                <BuyPart $w={52}>买单!</BuyPart>
                <BuyPart $w={30}>查看</BuyPart>
              </BuyLine>
            </Boxed>
            <Quote>
              {QUOTES.map(([a, b, c, d, e, f]) => {
                const split = /^[crg]/.test(c) && c.length <= 2;
                const col = split ? { c: CYAN, r: RED, g: GREY }[c[0]] : c;
                return (
                  <QRow key={a}>
                    <QCell><QLabel>{a}</QLabel>
                      {c === 'g'
                        ? <QVal $c={GREY}><i>{b}</i></QVal>
                        : <QVal $c={col} $tight={b.endsWith('%')}>{b}{split && <i>{c[1]}</i>}</QVal>}
                    </QCell>
                    <QCell $pl={3}><QLabel>{d}</QLabel><QVal $c={f}>{e}</QVal></QCell>
                  </QRow>
                );
              })}
            </Quote>
            <Sprite>短线精灵</Sprite>
            <SpriteRows>
              {[['奕瑞科技','2.'],['泛亚微透','1.'],['得润电子','4.']].map(([n, v]) => (
                <SpriteRow key={n}><span>15:00:00</span><span>{n}</span><span>急速拉升</span><span>{v}</span></SpriteRow>
              ))}
            </SpriteRows>
            <Sector>服装家纺<SectorPct>-0.27%</SectorPct><SectorMore>同行业比</SectorMore></Sector>
            <Ticks>
              {[['14:56','294'],['14:56','199'],['14:56','115'],['15:00','10430',1]].map(([t, q, u], i) => (
                <TickRow key={i}>
                  <TickTime>{t}</TickTime>
                  <TickPrice>6.05</TickPrice>
                  <TickQty $up={u}>{q}</TickQty>
                  {u ? Ic.tickUp : Ic.tickDown}
                </TickRow>
              ))}
            </Ticks>
            <TabStrip>
              {['细','诊','分','筹','焰','指','财'].map((t, i) => <Trap key={t} $first={i === 0} $active={i === 0}>{t}</Trap>)}
            </TabStrip>
          </Panel>
        </Body>
        <StatusBar />
      </Window>
    </>
  );
}
